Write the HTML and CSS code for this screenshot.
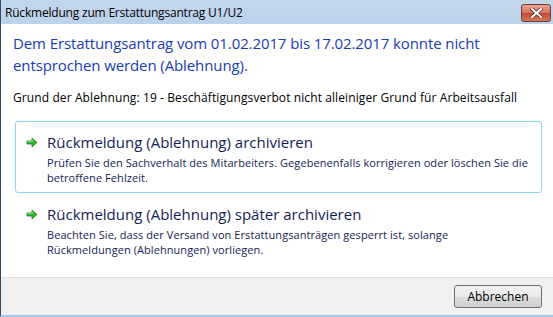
FILE: index.html
```html
<!DOCTYPE html>
<html lang="de">
<head>
<meta charset="UTF-8">
<title>Rückmeldung zum Erstattungsantrag U1/U2</title>
<link rel="stylesheet" href="styles.css">
</head>
<body>

<div class="window">
  <div class="titlebar">
    <span class="title">Rückmeldung zum Erstattungsantrag U1/U2</span>
    <button class="close" type="button" aria-label="Schließen">
      <svg width="13" height="10" viewBox="0 0 13 10">
        <path d="M2 1 L11 9 M11 1 L2 9" stroke="#5a2a2a" stroke-width="3.6" stroke-linecap="square"/>
        <path d="M2 1 L11 9 M11 1 L2 9" stroke="#fff" stroke-width="2.2" stroke-linecap="square"/>
      </svg>
    </button>
  </div>

  <div class="content">
    <h1 class="instruction">Dem Erstattungsantrag vom 01.02.2017 bis 17.02.2017 konnte nicht entsprochen werden (Ablehnung).</h1>
    <p class="reason">Grund der Ablehnung: 19 - Beschäftigungsverbot nicht alleiniger Grund für Arbeitsausfall</p>

    <!-- command links -->
    <div class="command-link active">
      <svg class="arrow" width="12" height="11" viewBox="0 0 12 11">
        <path d="M1 4 H6 V1 L11 5.5 L6 10 V7 H1 Z" fill="#2fb52f" stroke="#1d7a1d" stroke-width="0.8"/>
        <path d="M1.5 4.5 H6.5 V2.3" fill="none" stroke="#8ee08e" stroke-width="0.8"/>
      </svg>
      <div class="link-text">
        <div class="link-title">Rückmeldung (Ablehnung) archivieren</div>
        <div class="link-desc">Prüfen Sie den Sachverhalt des Mitarbeiters. Gegebenenfalls korrigieren oder löschen Sie die betroffene Fehlzeit.</div>
      </div>
    </div>

    <div class="command-link">
      <svg class="arrow" width="12" height="11" viewBox="0 0 12 11">
        <path d="M1 4 H6 V1 L11 5.5 L6 10 V7 H1 Z" fill="#2fb52f" stroke="#1d7a1d" stroke-width="0.8"/>
        <path d="M1.5 4.5 H6.5 V2.3" fill="none" stroke="#8ee08e" stroke-width="0.8"/>
      </svg>
      <div class="link-text">
        <div class="link-title">Rückmeldung (Ablehnung) später archivieren</div>
        <div class="link-desc">Beachten Sie, dass der Versand von Erstattungsanträgen gesperrt ist, solange Rückmeldungen (Ablehnungen) vorliegen.</div>
      </div>
    </div>
  </div>

  <div class="footer">
    <button class="btn" type="button">Abbrechen</button>
  </div>
</div>

</body>
</html>
```

FILE: styles.css
```css
html, body {
  margin: 0;
  padding: 0;
  height: 100%;
}
body {
  font-family: "Open Sans", "Noto Sans", sans-serif;
  font-size: 12px;
  background-color: #fff;
}
.window {
  height: 317px;
  display: flex;
  flex-direction: column;
  box-sizing: border-box;
  border-left: 1px solid #2f4866;
  box-shadow: inset 1px 0 0 #a9c0da;
  border-bottom: 2px solid #a7c7e8;
  overflow: hidden;
}
.titlebar {
  height: 24px;
  display: flex;
  align-items: center;
  justify-content: space-between;
  padding: 0 2px 0 4px;
  background: linear-gradient(#c2d6ec, #bcd2ea);
}
.title {
  font-size: 12px;
  color: #000;
  letter-spacing: -0.2px;
}
.close {
  width: 30px;
  height: 18px;
  margin-top: 1px;
  padding: 0;
  display: flex;
  align-items: center;
  justify-content: center;
  border: 1px solid #6e3a3a;
  border-radius: 3px;
  background: linear-gradient(#e8a493, #d4705a 50%, #c2452e 51%, #d77a5e);
}
.content {
  flex: 1;
  padding: 8px 12px 0 12px;
  background-color: #fff;
}
.instruction {
  margin: 0;
  font-size: 15px;
  font-weight: normal;
  line-height: 22px;
  color: #1a3cb0;
  letter-spacing: -0.1px;
}
.reason {
  margin: 14px 0 0 0;
  font-size: 12px;
  line-height: 15px;
  letter-spacing: 0.1px;
  color: #000;
}
.command-link {
  display: flex;
  align-items: flex-start;
  gap: 9px;
  margin: 16px 0 0 2px;
  padding: 9px 10px 7px 10px;
  width: 527px;
  box-sizing: border-box;
  border: 1px solid transparent;
  border-radius: 3px;
}
.command-link.active {
  border-color: #8bdaf3;
  box-shadow: 0 0 1px #c6ecfa;
}
.command-link + .command-link {
  margin-top: 0;
}
.arrow {
  margin-top: 6px;
  flex: none;
}
.link-title {
  font-size: 15px;
  line-height: 22px;
  color: #151c55;
}
.link-desc {
  margin-top: 2px;
  font-size: 11px;
  line-height: 15px;
  letter-spacing: 0.07px;
  color: #151c55;
}
.footer {
  height: 37px;
  display: flex;
  align-items: center;
  justify-content: flex-end;
  padding-right: 11px;
  background-color: #f0f0f0;
  border-top: 1px solid #dfdfdf;
}
.btn {
  width: 88px;
  height: 23px;
  font-family: inherit;
  font-size: 12px;
  color: #000;
  border: 1px solid #707070;
  border-radius: 3px;
  background: linear-gradient(#f2f2f2, #ebebeb 50%, #dddddd 51%, #cfcfcf);
}
```
